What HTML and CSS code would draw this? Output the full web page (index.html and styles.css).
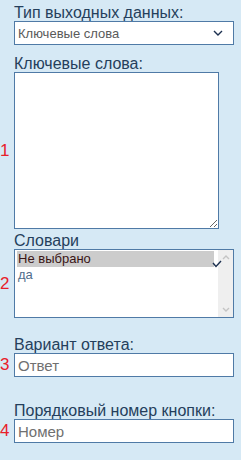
FILE: index.html
```html
<!DOCTYPE html>
<html lang="ru">
<head>
    <meta charset="UTF-8">
    <meta name="viewport" content="width=device-width, initial-scale=1.0">
    <title>Кнопка</title>
    <link rel="stylesheet" href="styles.css">
</head>
<body>
    <form class="panel">
        <!-- Тип выходных данных -->
        <div class="field">
            <label class="field-label">Тип выходных данных:</label>
            <div class="row">
                <span class="num"></span>
                <div class="select-box">
                    <span>Ключевые слова</span>
                    <svg class="chevron" width="10" height="6" viewBox="0 0 10 6"><path d="M1 1 L5 5 L9 1" fill="none" stroke="#1c3050" stroke-width="1.4"/></svg>
                </div>
            </div>
        </div>

        <!-- Ключевые слова -->
        <div class="field">
            <label class="field-label">Ключевые слова:</label>
            <div class="row">
                <span class="num">1</span>
                <textarea class="words"></textarea>
            </div>
        </div>

        <!-- Словари -->
        <div class="field tight">
            <label class="field-label">Словари</label>
            <div class="row">
                <span class="num">2</span>
                <div class="listbox">
                    <div class="options">
                        <div class="option selected">Не выбрано</div>
                        <div class="option">да</div>
                    </div>
                    <div class="scrollbar">
                        <svg width="8" height="5" viewBox="0 0 8 5"><path d="M1 4 L4 1 L7 4" fill="none" stroke="#c4c4c4" stroke-width="1.4"/></svg>
                        <svg width="8" height="5" viewBox="0 0 8 5"><path d="M1 1 L4 4 L7 1" fill="none" stroke="#c4c4c4" stroke-width="1.4"/></svg>
                    </div>
                    <svg class="tick" width="10" height="8" viewBox="0 0 10 8"><path d="M1 3 L4 6.5 L9 1" fill="none" stroke="#1c3050" stroke-width="1.4"/></svg>
                </div>
            </div>
        </div>

        <!-- Вариант ответа -->
        <div class="field spaced">
            <label class="field-label">Вариант ответа:</label>
            <div class="row">
                <span class="num">3</span>
                <input class="text-input" type="text" placeholder="Ответ">
            </div>
        </div>

        <!-- Порядковый номер -->
        <div class="field spaced">
            <label class="field-label">Порядковый номер кнопки:</label>
            <div class="row">
                <span class="num">4</span>
                <input class="text-input" type="text" placeholder="Номер">
            </div>
        </div>
    </form>
</body>
</html>
```

FILE: styles.css
```css
/* Reset */
* {
    margin: 0;
    padding: 0;
    box-sizing: border-box;
    font-family: "Liberation Sans", Arial, sans-serif;
}

body {
    background-color: #d6e9f5;
    width: 241px;
    height: 460px;
    overflow: hidden;
}

.panel {
    display: flex;
    flex-direction: column;
    padding-top: 3px;
}

/* Fields */
.field {
    display: flex;
    flex-direction: column;
    margin-bottom: 9px;
}

.field.tight {
    margin-top: -7px;
}

.field.spaced {
    margin-top: 8px;
    margin-bottom: 16px;
}

.field-label {
    display: block;
    padding-left: 14px;
    font-size: 16px;
    line-height: 19px;
    color: #253f5c;
    height: 18px;
}

.row {
    display: flex;
    align-items: center;
}

.num {
    width: 14px;
    font-size: 17px;
    color: #e8202a;
    line-height: 18px;
}

/* Controls */
.select-box {
    width: 220px;
    height: 24px;
    background-color: white;
    border: 1px solid #4f7aa6;
    display: flex;
    align-items: center;
    justify-content: space-between;
    padding: 0 10px 0 3px;
    font-size: 13px;
    color: #5a5a5a;
}

.words {
    width: 205px;
    height: 157px;
    background-color: white;
    border: 1px solid #4f7aa6;
    resize: both;
    outline: none;
}

.listbox {
    position: relative;
    width: 220px;
    height: 69px;
    background-color: white;
    border: 1px solid #4f7aa6;
    display: flex;
}

.options {
    flex: 1;
    padding: 1px 4px 0 2px;
}

.option {
    font-size: 13px;
    line-height: 16px;
    padding-left: 1px;
    color: #4f6d8c;
}

.option.selected {
    background-color: #cccccc;
    color: #3a1515;
}

.scrollbar {
    width: 15px;
    background-color: #efefef;
    display: flex;
    flex-direction: column;
    justify-content: space-between;
    align-items: center;
    padding: 5px 0 5px 0;
}

.tick {
    position: absolute;
    right: 11px;
    top: 10px;
}

.text-input {
    width: 220px;
    height: 24px;
    background-color: white;
    border: 1px solid #4f7aa6;
    padding: 0 3px;
    font-size: 15px;
    outline: none;
}

.text-input::placeholder {
    color: #707070;
}
```
